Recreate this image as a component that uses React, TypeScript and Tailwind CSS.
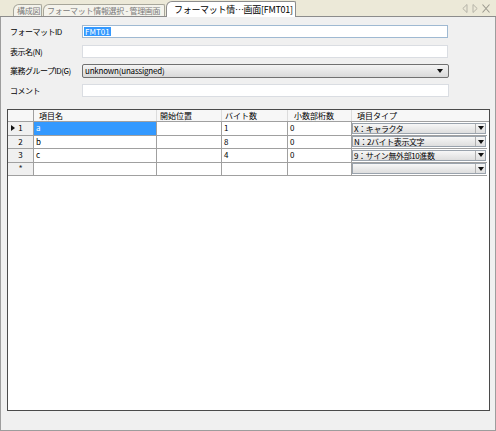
import React from "react";

const font = "font-['Noto_Sans_CJK_JP','Noto_Sans',sans-serif]";

const rows = [
  { no: "1", name: "a", start: "", bytes: "1", dec: "0", type: "X：キャラクタ", current: true },
  { no: "2", name: "b", start: "", bytes: "8", dec: "0", type: "N：2バイト表示文字" },
  { no: "3", name: "c", start: "", bytes: "4", dec: "0", type: "9：サイン無外部10進数" },
  { no: "*", name: "", start: "", bytes: "", dec: "", type: "" }
];

const cols = "grid grid-cols-[26px_123px_65px_66px_64px_135px]";

function Arrow() {
  return (
    <svg width="6" height="4" viewBox="0 0 6 4">
      <path d="M0 0h6L3 4z" fill="#111" />
    </svg>
  );
}

function Tab({ label, active, className }: { label: string; active?: boolean; className?: string }) {
  return (
    <div
      className={
        "relative flex items-center border border-b-0 rounded-tl-[6px] rounded-tr-[2px] " +
        (active
          ? "h-[16px] -mb-px bg-white border-[#8c8c8c] text-black text-[9px] pl-[7px] pr-[3px] z-10"
          : "h-[12px] bg-[#f4f3ec] border-[#a7a69a] text-[#7a7a7a] text-[8px] pl-[3px] pr-[2px]") +
        " " +
        (className ?? "")
      }
    >
      <span className="leading-none whitespace-nowrap tracking-[-0.3px]">{label}</span>
    </div>
  );
}

function Field({ label, children, className }: { label: string; children: React.ReactNode; className?: string }) {
  return (
    <div className={"flex items-center " + (className ?? "")}>
      <span className="w-[81px] pl-[9px] text-[8px] leading-none tracking-[-0.5px] text-black">{label}</span>
      {children}
    </div>
  );
}

function TypeCombo({ value }: { value: string }) {
  return (
    <div className="flex h-[11px] w-[134px] border border-[#9aa3ad] bg-gradient-to-b from-[#f7f7f7] to-[#dedede]">
      <span className="flex-1 pl-[1px] text-[8px] leading-[9px] tracking-[-0.4px] text-black whitespace-nowrap overflow-hidden">
        {value}
      </span>
      <span className="w-[10px] flex items-center justify-center border-l border-[#b0b0b0]">
        <Arrow />
      </span>
    </div>
  );
}

export default function App() {
  return (
    <div className={"w-[496px] h-[431px] bg-[#f0f0f0] flex flex-col " + font}>
      {/* tab strip */}
      <div className="h-[17px] shrink-0 bg-[#ece9d8] border-b border-[#8c8c8c] flex items-end pl-[13px] relative">
        <Tab label="構成図" className="w-[29px]" />
        <Tab label="フォーマット情報選択 - 管理画面" className="w-[122px] ml-[1px]" />
        <Tab label="フォーマット情…画面[FMT01]" active className="w-[130px] ml-[1px]" />
        <div className="ml-auto mr-[6px] mb-[3px] flex items-center gap-[4px]">
          <svg width="6" height="9" viewBox="0 0 6 9">
            <path d="M5 0.5L0.8 4.5L5 8.5z" fill="none" stroke="#b5b3a8" strokeWidth="1" />
          </svg>
          <svg width="6" height="9" viewBox="0 0 6 9">
            <path d="M1 0.5L5.2 4.5L1 8.5z" fill="none" stroke="#b5b3a8" strokeWidth="1" />
          </svg>
          <svg width="8" height="9" viewBox="0 0 8 9">
            <path d="M0.5 0.5L7.5 8.5M7.5 0.5L0.5 8.5" stroke="#9c9a90" strokeWidth="1.1" />
          </svg>
        </div>
      </div>

      {/* body */}
      <div className="flex-1 flex flex-col border-x border-b border-[#9d9d9d]">
        <Field label="フォーマットID" className="mt-[8px]">
          <div className="h-[13px] w-[366px] border border-[#9fb9d2] bg-white flex items-center pl-[1px]">
            <span className="bg-[#3399ff] text-white text-[8px] leading-[9px] px-[1px]">FMT01</span>
          </div>
        </Field>
        <Field label="表示名(N)" className="mt-[7px]">
          <div className="h-[13px] w-[366px] border border-[#dadde2] bg-white" />
        </Field>
        <Field label="業務グループID(G)" className="mt-[6px]">
          <div className="h-[14px] w-[367px] rounded-[2px] border border-[#707070] bg-gradient-to-b from-[#f4f4f4] to-[#d9d9d9] flex items-center pl-[2px] pr-[5px]">
            <span className="flex-1 text-[8px] leading-none tracking-[-0.2px] text-black">unknown(unassigned)</span>
            <Arrow />
          </div>
        </Field>
        <Field label="コメント" className="mt-[6px]">
          <div className="h-[13px] w-[367px] border border-[#dadde2] bg-white" />
        </Field>

        {/* grid */}
        <div className="mt-[12px] ml-[6px] w-[483px] h-[302px] border border-[#4a4a4a] bg-white">
          <div className={cols + " h-[12px] bg-[#f7f7f7] border-b border-[#a0a0a0] text-[8px] leading-none text-black"}>
            <div className="border-r border-[#a0a0a0]" />
            <div className="flex items-center pl-[5px] border-r border-[#dcdcdc]">項目名</div>
            <div className="flex items-center pl-[3px] border-r border-[#dcdcdc]">開始位置</div>
            <div className="flex items-center pl-[3px] border-r border-[#dcdcdc]">バイト数</div>
            <div className="flex items-center pl-[6px] border-r border-[#dcdcdc]">小数部桁数</div>
            <div className="flex items-center pl-[5px]">項目タイプ</div>
          </div>
          {rows.map((r) => (
            <div key={r.no} className={cols + " h-[13.5px] text-[8px] leading-none text-black"}>
              <div className="flex items-center justify-center bg-[#f0f0f0] border-r border-b border-[#a0a0a0] relative">
                {r.current && (
                  <svg className="absolute left-[3px]" width="4" height="6" viewBox="0 0 4 6">
                    <path d="M0 0L4 3L0 6z" fill="#111" />
                  </svg>
                )}
                <span className={r.no === "*" ? "text-[9px] text-[#333]" : ""}>{r.no}</span>
              </div>
              <div
                className={
                  "flex items-center pl-[2px] border-r border-b border-[#a0a0a0] " +
                  (r.current ? "bg-[#3399ff] text-white" : "")
                }
              >
                {r.name}
              </div>
              <div className="flex items-center pl-[2px] border-r border-b border-[#a0a0a0]">{r.start}</div>
              <div className="flex items-center pl-[2px] border-r border-b border-[#a0a0a0]">{r.bytes}</div>
              <div className="flex items-center pl-[2px] border-r border-b border-[#a0a0a0]">{r.dec}</div>
              <div className="flex items-center border-b border-[#a0a0a0]">
                <TypeCombo value={r.type} />
              </div>
            </div>
          ))}
        </div>
      </div>
    </div>
  );
}
